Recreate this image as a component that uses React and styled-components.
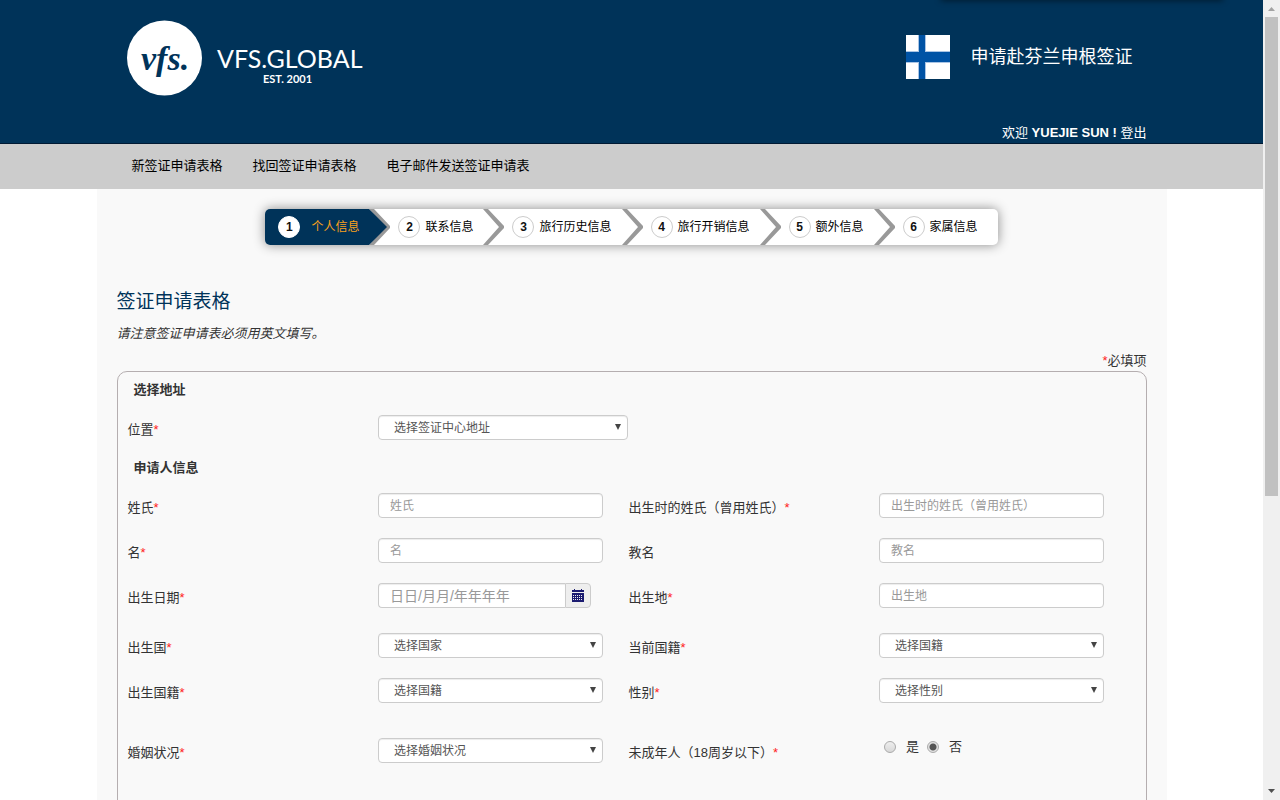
import React, { useState } from 'react';
import styled, { createGlobalStyle } from 'styled-components';

const steps = ['个人信息', '联系信息', '旅行历史信息', '旅行开销信息', '额外信息', '家属信息'];
const menu = ['新签证申请表格', '找回签证申请表格', '电子邮件发送签证申请表'];

// each row holds one or two fields, space is the gap below the row
const rows = [
  {
    space: 20,
    fields: [
      { id: 'surname', label: '姓氏', required: true, placeholder: '姓氏' },
      { id: 'birthSurname', label: '出生时的姓氏（曾用姓氏）', required: true, placeholder: '出生时的姓氏（曾用姓氏）' },
    ],
  },
  {
    space: 20,
    fields: [
      { id: 'firstName', label: '名', required: true, placeholder: '名' },
      { id: 'givenName', label: '教名', placeholder: '教名' },
    ],
  },
  {
    space: 25,
    fields: [
      { id: 'birthDate', type: 'date', label: '出生日期', required: true, placeholder: '日日/月月/年年年年' },
      { id: 'birthPlace', label: '出生地', required: true, placeholder: '出生地' },
    ],
  },
  {
    space: 20,
    fields: [
      { id: 'birthCountry', type: 'select', label: '出生国', required: true, placeholder: '选择国家' },
      { id: 'nationality', type: 'select', label: '当前国籍', required: true, placeholder: '选择国籍' },
    ],
  },
  {
    space: 35,
    fields: [
      { id: 'birthNationality', type: 'select', label: '出生国籍', required: true, placeholder: '选择国籍' },
      { id: 'gender', type: 'select', label: '性别', required: true, placeholder: '选择性别' },
    ],
  },
  {
    space: 60,
    fields: [
      { id: 'marital', type: 'select', label: '婚姻状况', required: true, placeholder: '选择婚姻状况' },
      { id: 'minor', type: 'radio', label: '未成年人（18周岁以下）', required: true },
    ],
  },
];

const Logo = () => (
  <LogoSvg viewBox="0 0 240 76" role="img" aria-label="VFS.GLOBAL EST. 2001">
    <circle cx="37.5" cy="38" r="37.5" fill="#fff" />
    <text x="14" y="50" fontFamily="Liberation Serif, serif" fontStyle="italic" fontWeight="700" fontSize="34" fill="#003359">vfs.</text>
    <text x="90" y="48" fontFamily="Lato, sans-serif" fontSize="25" fill="#fff">VFS.GLOBAL</text>
    <text x="136" y="63" fontFamily="Lato, sans-serif" fontWeight="700" fontSize="11" fill="#fff">EST. 2001</text>
  </LogoSvg>
);

const Flag = () => (
  <FlagSvg viewBox="0 0 44 44" role="img" aria-label="芬兰">
    <rect width="44" height="44" fill="#fff" />
    <path d="M12 0h8v44h-8zM0 16h44v12H0z" fill="#a9c4e4" />
    <path d="M13 0h6v44h-6zM0 17h44v10H0z" fill="#0053a5" />
  </FlagSvg>
);

const CalendarIcon = () => (
  <svg width="12" height="13" viewBox="0 0 12 13" aria-hidden="true">
    <path d="M2 0h1v1h6V0h1v1h2v2H0V1h2zM0 4h12v9H0z" fill="#1b1b70" />
    <g fill="#eee">
      {[6, 8, 10].map((y) => [1, 3, 5, 7, 9].map((x) => <rect key={x + '-' + y} x={x} y={y} width="1" height="1" />))}
    </g>
  </svg>
);

const Arrow = ({ active }) => (
  <ArrowSvg viewBox="0 0 22 36" aria-hidden="true">
    <rect width="22" height="36" fill="#fff" />
    <path d="M0 0H5L21 17V19L5 36H0L16 18z" fill="#999" />
    {active && <path d="M0 0L18 18L0 36z" fill="#003359" />}
  </ArrowSvg>
);

const Field = ({ field }) => {
  const [value, setValue] = useState('no');
  const { id, type, label, required, placeholder, wide } = field;

  const star = required && <Star>*</Star>;
  if (type === 'radio') {
    return (
      <>
        <Label as="span" id={id}>{label}{star}</Label>
        <RadioGroup role="radiogroup" aria-labelledby={id}>
          <RadioLabel>
            <Radio type="radio" name={id} checked={value === 'yes'} onChange={() => setValue('yes')} />是
          </RadioLabel>
          <RadioLabel>
            <Radio type="radio" name={id} checked={value === 'no'} onChange={() => setValue('no')} />否
          </RadioLabel>
        </RadioGroup>
      </>
    );
  }
  return (
    <>
      <Label htmlFor={id}>{label}{star}</Label>
      {type === 'select' && (
        <SelectWrap $wide={wide}>
          <Select id={id}><option>{placeholder}</option></Select>
        </SelectWrap>
      )}
      {type === 'date' && (
        <DateGroup>
          <DateInput id={id} placeholder={placeholder} />
          <DateButton type="button" aria-label="选择日期"><CalendarIcon /></DateButton>
        </DateGroup>
      )}
      {!type && <Input id={id} placeholder={placeholder} />}
    </>
  );
};

const App = () => {
  return (
    <Shell>
      <GlobalStyle />
      <Page>
        <Header>
          <HeaderInner>
            <Logo />
            <HeaderRight>
              <Country><Flag />申请赴芬兰申根签证</Country>
              <Welcome>欢迎 <b>YUEJIE SUN !</b> <a href="#logout">登出</a></Welcome>
            </HeaderRight>
          </HeaderInner>
        </Header>
        <Nav>
          <NavInner>
            {menu.map((item) => <NavLink href="#form" key={item}>{item}</NavLink>)}
          </NavInner>
        </Nav>
        <Main>
          <Steps>
            {steps.map((step, i) => (
              <Step key={step} $active={i === 0} $last={i === steps.length - 1}>
                <StepNumber $active={i === 0}>{i + 1}</StepNumber>
                {step}
                {i < steps.length - 1 && <Arrow active={i === 0} />}
              </Step>
            ))}
          </Steps>
          <Title>签证申请表格</Title>
          <Note>请注意签证申请表必须用英文填写。</Note>
          <Required><Star>*</Star>必填项</Required>
          <Form id="form">
            <SectionTitle>选择地址</SectionTitle>
            <Row $space={18}>
              <Field field={{ id: 'location', type: 'select', label: '位置', required: true, placeholder: '选择签证中心地址', wide: true }} />
            </Row>
            <SectionTitle>申请人信息</SectionTitle>
            {rows.map((row) => (
              <Row key={row.fields[0].id} $space={row.space}>
                {row.fields.map((field) => <Field key={field.id} field={field} />)}
              </Row>
            ))}
          </Form>
        </Main>
      </Page>
      <ScrollBar aria-hidden="true">
        <ScrollArrow viewBox="0 0 17 17"><path d="M5 11L8.500 7L12 11z" fill="#a3a3a3" /></ScrollArrow>
        <ScrollTrack><ScrollThumb /></ScrollTrack>
        <ScrollArrow viewBox="0 0 17 17"><path d="M5 6L8.500 10L12 6z" fill="#505050" /></ScrollArrow>
      </ScrollBar>
    </Shell>
  );
};

export default App;

const GlobalStyle = createGlobalStyle`
  * {
    box-sizing: border-box;
  }
  body {
    margin: 0;
    background: #fff;
    color: #333;
    font-family: "Liberation Sans", "Noto Sans CJK SC", sans-serif;
    font-size: 13px;
    line-height: 20px;
  }
  input, select, button {
    font-family: inherit;
  }
`;

const Shell = styled.div`
  display: flex;
  height: 100vh;
`;
const Page = styled.div`
  flex: 1;
  min-width: 0;
  overflow: auto;
  scrollbar-width: none;
`;
const Header = styled.header`
  position: relative;
  background: #003359;
  border-bottom: 1px solid #001a33;
  color: #fff;
  &::after {
    content: '';
    position: absolute;
    top: -4px;
    right: 40px;
    width: 282px;
    height: 4px;
    box-shadow: 0 0 6px rgba(0, 0, 0, 0.7);
  }
`;
const HeaderInner = styled.div`
  display: flex;
  justify-content: space-between;
  max-width: 1070px;
  min-height: 143px;
  margin: 0 auto;
  padding: 0 20px 0 30px;
`;
const LogoSvg = styled.svg`
  width: 240px;
  height: 76px;
  margin-top: 20px;
`;
const HeaderRight = styled.div`
  display: flex;
  flex-direction: column;
  justify-content: space-between;
  align-items: flex-end;
  padding-top: 35px;
`;
const Country = styled.div`
  display: flex;
  align-items: center;
  gap: 21px;
  margin-right: 14px;
  font-size: 18px;
`;
const FlagSvg = styled.svg`
  width: 44px;
  height: 44px;
`;
const Welcome = styled.div`
  a {
    color: #fff;
    text-decoration: none;
  }
`;
const Nav = styled.nav`
  background: #ccc;
`;
const NavInner = styled.div`
  display: flex;
  gap: 30px;
  max-width: 1070px;
  margin: 0 auto;
  padding: 12px 35px 13px;
`;
const NavLink = styled.a`
  color: #000;
  text-decoration: none;
`;
const Main = styled.main`
  max-width: 1070px;
  margin: 0 auto;
  padding: 20px;
  background: #f9f9f9;
`;
const Steps = styled.ol`
  display: flex;
  width: fit-content;
  margin: 0 auto;
  padding: 0;
  list-style: none;
  border-radius: 5px;
  background: #fff;
  box-shadow: 0 0 12px rgba(0, 0, 0, 0.45);
`;
const Step = styled.li`
  position: relative;
  display: flex;
  align-items: center;
  gap: ${(props) => (props.$active ? '11px' : '5px')};
  height: 36px;
  padding-left: ${(props) => (props.$active ? '13px' : '24px')};
  padding-right: ${(props) => (props.$last ? '20px' : '15px')};
  border-radius: 5px 0 0 5px;
  background: ${(props) => (props.$active ? '#003359' : 'transparent')};
  color: ${(props) => (props.$active ? '#f9a11b' : '#000')};
  font-size: 12px;
  white-space: nowrap;
`;
const StepNumber = styled.span`
  width: 22px;
  height: 22px;
  border: 1px solid ${(props) => (props.$active ? '#fff' : '#ccc')};
  border-radius: 50%;
  background: #fff;
  color: #111;
  font-weight: bold;
  text-align: center;
`;
const ArrowSvg = styled.svg`
  position: absolute;
  top: 0;
  right: -17px;
  width: 22px;
  height: 36px;
`;
const Title = styled.h1`
  margin: 44px 0 0;
  color: #003359;
  font-size: 19px;
  font-weight: normal;
  line-height: 26px;
`;
const Note = styled.p`
  margin: 9px 0 0;
  font-style: italic;
`;
const Required = styled.p`
  margin: 7px 0 0;
  text-align: right;
`;
const Star = styled.span`
  color: #f22;
`;
const Form = styled.form`
  padding: 8px 16px 0 10px;
  border: 1px solid #b5aeb0;
  border-radius: 10px;
`;
const SectionTitle = styled.h2`
  margin: 0 0 15px 6px;
  font-size: 13px;
  font-weight: bold;
`;
const Row = styled.div`
  display: grid;
  grid-template-columns: repeat(4, 1fr);
  height: 25px;
  margin-bottom: ${(props) => props.$space}px;
`;
const Label = styled.label`
  padding-top: 5px;
  white-space: nowrap;
`;
const Input = styled.input`
  width: 225px;
  height: 25px;
  padding: 0 11px;
  border: 1px solid #ccc;
  border-radius: 4px;
  background: #fff;
  box-shadow: inset 0 1px 1px rgba(0, 0, 0, 0.075);
  color: #555;
  font-size: 12px;
  outline: none;
  &::placeholder {
    color: #999;
  }
`;
const SelectWrap = styled.div`
  position: relative;
  width: ${(props) => (props.$wide ? '250px' : '225px')};
  &::after {
    content: '';
    position: absolute;
    top: 9px;
    right: 7px;
    border: 3px solid transparent;
    border-top: 6px solid #444;
    border-bottom: 0;
    pointer-events: none;
  }
`;
const Select = styled(Input).attrs({ as: 'select' })`
  display: block;
  width: 100%;
  padding: 0 15px;
  appearance: none;
`;
const DateGroup = styled.div`
  display: flex;
`;
const DateInput = styled(Input)`
  width: 187px;
  border-right: 0;
  border-radius: 4px 0 0 4px;
  font-size: 14px;
`;
const DateButton = styled.button`
  display: flex;
  align-items: center;
  justify-content: center;
  width: 26px;
  height: 25px;
  padding: 0;
  border: 1px solid #ccc;
  border-radius: 0 4px 4px 0;
  background: #eee;
`;
const RadioGroup = styled.div`
  display: flex;
  gap: 8px;
  padding-left: 5px;
`;
const RadioLabel = styled.label`
  display: flex;
  align-items: center;
  gap: 10px;
  height: 18px;
`;
const Radio = styled.input`
  width: 12px;
  height: 12px;
  margin: 0;
  appearance: none;
  border: 1px solid #aaa;
  border-radius: 50%;
  background: linear-gradient(#eee, #d8d8d8);
  &:checked {
    background: radial-gradient(circle, #555 0 3px, #e2e2e2 4px);
  }
`;
const ScrollBar = styled.div`
  display: flex;
  flex-direction: column;
  width: 17px;
  background: #f0f0f0;
`;
const ScrollArrow = styled.svg`
  width: 17px;
  height: 17px;
`;
const ScrollTrack = styled.div`
  flex: 1;
  padding: 0 2px;
`;
const ScrollThumb = styled.div`
  height: 62.5%;
  background: #c1c1c1;
`;
